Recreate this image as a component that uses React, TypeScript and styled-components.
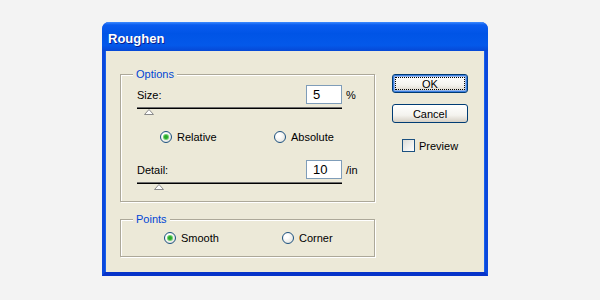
import styled, { createGlobalStyle } from 'styled-components'

const GlobalStyle = createGlobalStyle`
    html, body {
        margin: 0;
        background: #f3f3f3;
    }
    body {
        font-family: 'Liberation Sans', Arial, sans-serif;
        font-size: 11px;
        color: #000;
    }
`

const Page = styled.div`
    padding: 22px 0 0 102px;
    height: 300px;
    box-sizing: border-box;
`

const Window = styled.div`
    width: 386px;
    height: 254px;
    box-sizing: border-box;
    display: flex;
    flex-direction: column;
    background: #ece9d8;
    border: 3px solid #0a48dc;
    border-top: 0;
    border-bottom-width: 4px;
    border-bottom-color: #0633c9;
    border-radius: 7px 7px 0 0;
    box-shadow: inset 1px 0 0 #1660ec, inset -1px 0 0 #1660ec;
`

const TitleBar = styled.div`
    height: 29px;
    margin: 0 -3px;
    padding: 0 6px;
    display: flex;
    align-items: center;
    border-radius: 7px 7px 0 0;
    background: linear-gradient(
        #3d8cff 0%,
        #0a5cef 10%,
        #0054e6 40%,
        #0459ea 80%,
        #0648d6 100%
    );
`

const Title = styled.span`
    color: #fff;
    font-weight: bold;
    font-size: 13px;
    margin-top: 3px;
    text-shadow: 1px 1px 0 #0a1e8c;
`

const Body = styled.div`
    flex: 1;
    display: flex;
    gap: 17px;
    padding: 23px 0 0 15px;
`

const LeftCol = styled.div`
    width: 255px;
    display: flex;
    flex-direction: column;
    gap: 17px;
`

const Group = styled.div<{ $height: number }>`
    height: ${(p) => p.$height}px;
    box-sizing: border-box;
    border: 1px solid #aca899;
    box-shadow: 1px 1px 0 #fff, inset 1px 1px 0 #fff;
`

const Legend = styled.div`
    margin: -7px 0 0 12px;
    padding: 0 3px;
    width: fit-content;
    line-height: 13px;
    color: #0046d5;
    background: #ece9d8;
`

const FieldRow = styled.div<{ $top: number }>`
    margin: ${(p) => p.$top}px 0 0 16px;
    display: grid;
    grid-template-columns: 169px 36px auto;
    align-items: center;
`

const NumberBox = styled.input`
    width: 36px;
    height: 19px;
    box-sizing: border-box;
    border: 1px solid #7f9db9;
    background: #fff;
    padding: 0 0 0 6px;
    font-family: 'Liberation Sans', Arial, sans-serif;
    font-size: 13px;
    color: #000;
    outline: none;
`

const Unit = styled.span`
    margin-left: 4px;
`

const SliderTrack = styled.div`
    margin: 3px 0 0 16px;
    width: 205px;
    height: 2px;
    background: #000;
    border-top: 1px solid #6d6d6d;
    box-sizing: border-box;
`

const ThumbIcon = styled.svg<{ $offset: number }>`
    display: block;
    margin-left: ${(p) => 16 + p.$offset}px;
`

const Slider = ({ offset }: { offset: number }) => (
    <>
        <SliderTrack />
        <ThumbIcon $offset={offset} width="10" height="6" viewBox="0 0 10 6">
            <polygon
                points="5,0.5 9.5,5.5 0.5,5.5"
                fill="#fff"
                stroke="#8a8a8a"
                strokeWidth="1"
            />
        </ThumbIcon>
    </>
)

const RadioRow = styled.div<{ $top: number; $left: number; $col: number }>`
    margin: ${(p) => p.$top}px 0 0 ${(p) => p.$left}px;
    display: grid;
    grid-template-columns: ${(p) => p.$col}px auto;
`

const RadioItem = styled.label`
    display: flex;
    align-items: center;
    gap: 5px;
    height: 13px;
`

const RadioCircle = styled.span<{ $checked?: boolean }>`
    width: 12px;
    height: 12px;
    box-sizing: border-box;
    border-radius: 50%;
    border: 1px solid #1c5180;
    background: radial-gradient(circle at 35% 35%, #fff 20%, #dcdcd4 100%);
    display: flex;
    align-items: center;
    justify-content: center;

    &::after {
        content: '';
        width: 4px;
        height: 4px;
        border-radius: 50%;
        background: ${(p) => (p.$checked ? '#2aa82a' : 'transparent')};
        box-shadow: ${(p) => (p.$checked ? '0 0 0 1px #6fd16f' : 'none')};
    }
`

const Radio = ({ label, checked }: { label: string; checked?: boolean }) => (
    <RadioItem>
        <RadioCircle $checked={checked} />
        {label}
    </RadioItem>
)

const RightCol = styled.div`
    width: 76px;
    display: flex;
    flex-direction: column;
`

const Button = styled.button<{ $default?: boolean }>`
    width: 76px;
    height: 19px;
    margin-bottom: 11px;
    padding: 0;
    box-sizing: border-box;
    border: 1px solid #003c74;
    border-radius: 3px;
    background: linear-gradient(#fff 0%, #f4f3ee 60%, #d6d0c5 100%);
    font-family: 'Liberation Sans', Arial, sans-serif;
    font-size: 11px;
    color: #000;
    box-shadow: ${(p) =>
        p.$default
            ? 'inset 0 0 0 1px #3c7fe1, inset 0 0 0 2px #98b8ea'
            : 'none'};
    outline: ${(p) => (p.$default ? '1px dotted #000' : 'none')};
    outline-offset: -4px;
`

const CheckRow = styled.label`
    margin: 5px 0 0 10px;
    display: flex;
    align-items: center;
    gap: 4px;
`

const CheckBox = styled.span`
    width: 13px;
    height: 13px;
    box-sizing: border-box;
    border: 1px solid #1c5180;
    background: linear-gradient(135deg, #dcdcd7 0%, #fff 100%);
`

export default function App() {
    return (
        <Page>
            <GlobalStyle />
            <Window>
                <TitleBar>
                    <Title>Roughen</Title>
                </TitleBar>
                <Body>
                    <LeftCol>
                        <Group $height={128}>
                            <Legend>Options</Legend>
                            <FieldRow $top={4}>
                                <span>Size:</span>
                                <NumberBox readOnly value="5" />
                                <Unit>%</Unit>
                            </FieldRow>
                            <Slider offset={7} />
                            <RadioRow $top={15} $left={39} $col={114}>
                                <Radio label="Relative" checked />
                                <Radio label="Absolute" />
                            </RadioRow>
                            <FieldRow $top={17}>
                                <span>Detail:</span>
                                <NumberBox readOnly value="10" />
                                <Unit>/in</Unit>
                            </FieldRow>
                            <Slider offset={17} />
                        </Group>
                        <Group $height={38}>
                            <Legend>Points</Legend>
                            <RadioRow $top={5} $left={43} $col={118}>
                                <Radio label="Smooth" checked />
                                <Radio label="Corner" />
                            </RadioRow>
                        </Group>
                    </LeftCol>
                    <RightCol>
                        <Button $default>OK</Button>
                        <Button>Cancel</Button>
                        <CheckRow>
                            <CheckBox />
                            Preview
                        </CheckRow>
                    </RightCol>
                </Body>
            </Window>
        </Page>
    )
}
